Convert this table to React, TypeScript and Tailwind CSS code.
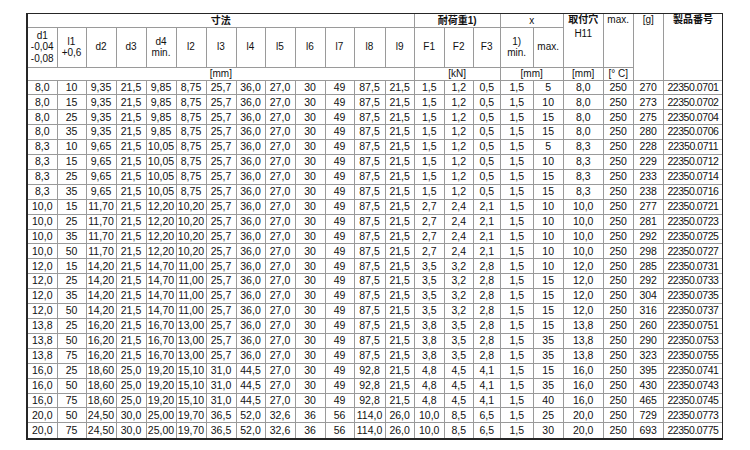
import React from "react";

const widths = [29, 29, 30, 30, 30, 30, 30, 29, 30, 30, 29, 31, 29, 30, 29, 27, 33, 30, 40, 30, 30, 59];

type Grp = { d1: string; d2: string; d3: string; d4: string; l2: string; l3: string; l4: string; l5: string; l6: string; l7: string; l8: string; l9: string; f1: string; f2: string; f3: string };

const g8: Grp = { d1: "8,0", d2: "9,35", d3: "21,5", d4: "9,85", l2: "8,75", l3: "25,7", l4: "36,0", l5: "27,0", l6: "30", l7: "49", l8: "87,5", l9: "21,5", f1: "1,5", f2: "1,2", f3: "0,5" };
const g83: Grp = { ...g8, d1: "8,3", d2: "9,65", d4: "10,05" };
const g10: Grp = { ...g8, d1: "10,0", d2: "11,70", d4: "12,20", l2: "10,20", f1: "2,7", f2: "2,4", f3: "2,1" };
const g12: Grp = { ...g8, d1: "12,0", d2: "14,20", d4: "14,70", l2: "11,00", f1: "3,5", f2: "3,2", f3: "2,8" };
const g138: Grp = { ...g8, d1: "13,8", d2: "16,20", d4: "16,70", l2: "13,00", f1: "3,8", f2: "3,5", f3: "2,8" };
const g16: Grp = { d1: "16,0", d2: "18,60", d3: "25,0", d4: "19,20", l2: "15,10", l3: "31,0", l4: "44,5", l5: "27,0", l6: "30", l7: "49", l8: "92,8", l9: "21,5", f1: "4,8", f2: "4,5", f3: "4,1" };
const g20: Grp = { d1: "20,0", d2: "24,50", d3: "30,0", d4: "25,00", l2: "19,70", l3: "36,5", l4: "52,0", l5: "32,6", l6: "36", l7: "56", l8: "114,0", l9: "26,0", f1: "10,0", f2: "8,5", f3: "6,5" };

const raw: [Grp, string, string, string, string][] = [
  [g8, "10", "5", "270", "0701"],
  [g8, "15", "10", "273", "0702"],
  [g8, "25", "15", "275", "0704"],
  [g8, "35", "15", "280", "0706"],
  [g83, "10", "5", "228", "0711"],
  [g83, "15", "10", "229", "0712"],
  [g83, "25", "15", "233", "0714"],
  [g83, "35", "15", "238", "0716"],
  [g10, "15", "10", "277", "0721"],
  [g10, "25", "10", "281", "0723"],
  [g10, "35", "10", "292", "0725"],
  [g10, "50", "10", "298", "0727"],
  [g12, "15", "10", "285", "0731"],
  [g12, "25", "15", "292", "0733"],
  [g12, "35", "15", "304", "0735"],
  [g12, "50", "15", "316", "0737"],
  [g138, "25", "15", "260", "0751"],
  [g138, "50", "35", "290", "0753"],
  [g138, "75", "35", "323", "0755"],
  [g16, "25", "15", "395", "0741"],
  [g16, "50", "35", "430", "0743"],
  [g16, "75", "40", "465", "0745"],
  [g20, "50", "25", "729", "0773"],
  [g20, "75", "30", "693", "0775"],
];

const rows: string[][] = raw.map(([g, l1, xmax, w, code]) => [
  g.d1, l1, g.d2, g.d3, g.d4, g.l2, g.l3, g.l4, g.l5, g.l6, g.l7, g.l8, g.l9, g.f1, g.f2, g.f3,
  "1,5", xmax, g.d1, "250", w, "22350." + code,
]);

const cell = "border border-[#9a9a9a] p-0 text-center align-middle whitespace-nowrap";
const bold = "font-bold";

export default function App() {
  return (
    <div
      className="w-[750px] h-[450px] bg-white pt-[13px] pl-[26px] text-[#111]"
      style={{ fontFamily: '"Liberation Sans", Arial, "Noto Sans CJK JP", sans-serif' }}
    >
      <div className="w-[697px] border-t border-r border-l-2 border-b-2 border-[#262626]">
        <table className="w-[694px] table-fixed border-collapse border-hidden text-[10px] leading-[11.5px]">
          <colgroup>
            {widths.map((w, i) => (
              <col key={i} style={{ width: w }} />
            ))}
          </colgroup>
          <thead>
            <tr className="h-[13px]">
              <td colSpan={13} className={`${cell} ${bold}`}>寸法</td>
              <td colSpan={3} className={`${cell} ${bold}`}>耐荷重1)</td>
              <td colSpan={2} className={cell}>x</td>
              <td rowSpan={2} className={`${cell} !align-top`}>
                <div className="font-bold">取付穴</div>
                <div className="mt-[2px]">H11</div>
              </td>
              <td rowSpan={2} className={`${cell} !align-top`}>max.</td>
              <td rowSpan={3} className={`${cell} !align-top`}>[g]</td>
              <td rowSpan={3} className={`${cell} ${bold} !align-top`}>製品番号</td>
            </tr>
            <tr className="h-[40px]">
              <td className={cell}>d1<br />-0,04<br />-0,08</td>
              <td className={cell}>l1<br />+0,6</td>
              <td className={cell}>d2</td>
              <td className={cell}>d3</td>
              <td className={cell}>d4<br />min.</td>
              <td className={cell}>l2</td>
              <td className={cell}>l3</td>
              <td className={cell}>l4</td>
              <td className={cell}>l5</td>
              <td className={cell}>l6</td>
              <td className={cell}>l7</td>
              <td className={cell}>l8</td>
              <td className={cell}>l9</td>
              <td className={cell}>F1</td>
              <td className={cell}>F2</td>
              <td className={cell}>F3</td>
              <td className={cell}>1)<br />min.</td>
              <td className={cell}>max.</td>
            </tr>
            <tr className="h-[13px]">
              <td colSpan={13} className={cell}>[mm]</td>
              <td colSpan={3} className={cell}>[kN]</td>
              <td colSpan={2} className={cell}>[mm]</td>
              <td className={cell}>[mm]</td>
              <td className={cell}>[° C]</td>
            </tr>
          </thead>
          <tbody>
            {rows.map((r, i) => (
              <tr key={i} className="h-[14.92px]">
                {r.map((v, j) => (
                  <td
                    key={j}
                    className={`${cell} ${j === 21 ? "text-[10.5px] tracking-[-0.45px]" : "text-[10.5px]"}`}
                  >
                    {v}
                  </td>
                ))}
              </tr>
            ))}
          </tbody>
        </table>
      </div>
    </div>
  );
}
